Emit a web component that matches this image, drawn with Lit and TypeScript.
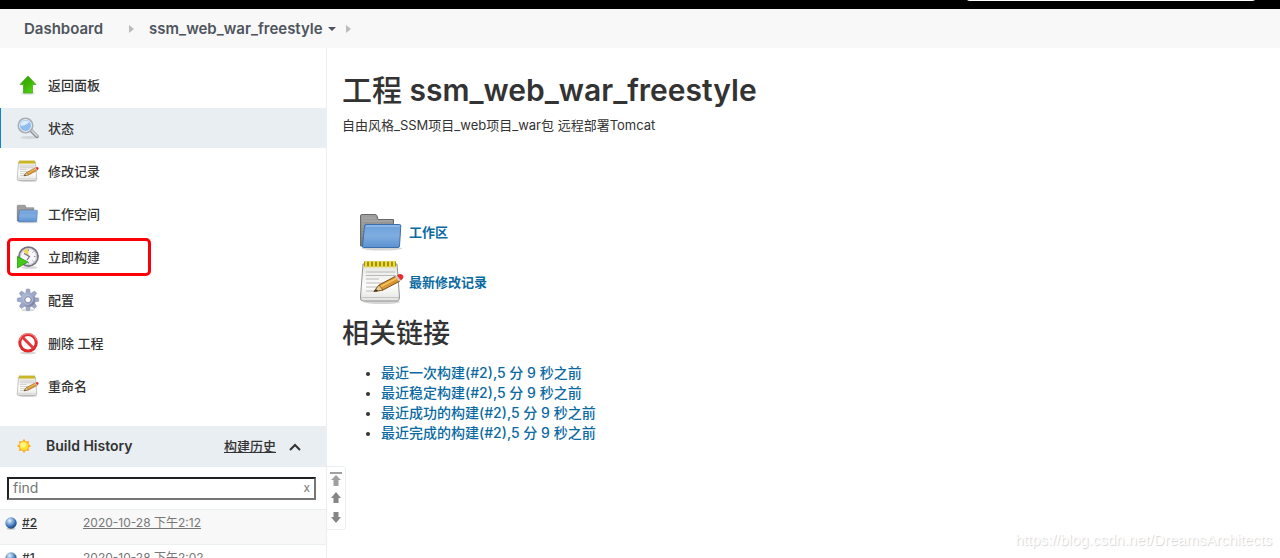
import { LitElement, html, css, svg, TemplateResult } from "lit";
import { customElement, state } from "lit/decorators.js";

const arrowIcon = svg`
  <svg viewBox="0 0 48 48" aria-hidden="true">
    <defs><linearGradient id="ag" x1="0" y1="0" x2="1" y2="1"><stop offset="0" stop-color="#2f9e00"/><stop offset=".5" stop-color="#3db503"/><stop offset="1" stop-color="#5ce01a"/></linearGradient></defs>
    <ellipse cx="24" cy="41" rx="14" ry="2.5" fill="#ccc" opacity=".7"/>
    <path d="M24 6 40 23H33V40H15V23H8Z" fill="url(#ag)" stroke="#43a81c" stroke-width="1.5" stroke-linejoin="round"/>
  </svg>`;

const searchIcon = svg`
  <svg viewBox="0 0 48 48" aria-hidden="true">
    <ellipse cx="26" cy="43" rx="17" ry="3" fill="#b9bec2" opacity=".5"/>
    <path d="M29 28 42 41" stroke="#8c9094" stroke-width="7" stroke-linecap="round"/>
    <path d="M31 29 42 40" stroke="#d8dadb" stroke-width="3.5" stroke-linecap="round"/>
    <circle cx="19" cy="19" r="14" fill="#a7cdf3" stroke="#a8acb3" stroke-width="4"/>
    <circle cx="19" cy="19" r="12" fill="#8fbdf0" stroke="#e9eff6" stroke-width="2"/>
    <path d="M9 19a10 10 0 0 1 18-6C22 14 19 21 9 19Z" fill="#dcecfc"/>
  </svg>`;

const notepadIcon = svg`
  <svg viewBox="0 0 48 48" aria-hidden="true">
    <defs><linearGradient id="ng" x1="0" y1="0" x2="0" y2="1"><stop offset="0" stop-color="#e4e4e0"/><stop offset=".6" stop-color="#fdfdfc"/><stop offset="1" stop-color="#e2e2df"/></linearGradient></defs>
    <ellipse cx="24" cy="44" rx="18" ry="2" fill="#999" opacity=".4"/>
    <path d="M5 6H39L41.500 39Q41.500 43 39 43H5Q2 43 2.500 39Z" fill="url(#ng)" stroke="#939393"/>
    <path d="M3.500 39.500H41" stroke="#c4c4c4"/>
    <path d="M8 14H37M8 17.500H37M8 21H21M8 25H34M8 29H27M8 33H18" stroke="#b9b9b9" stroke-width="1.1"/>
    <path d="M6 6H38" stroke="#857818" stroke-width="5"/>
    <path d="M8 4V8.500M12 4V8.500M16 4V8.500M20 4V8.500M24 4V8.500M28 4V8.500M32 4V8.500M36 4V8.500" stroke="#f0dc30" stroke-width="2.500" stroke-linecap="round"/>
    <path d="M16 33.500 21 27 38 18 42 23 25 32Z" fill="#d99532" stroke="#80501a" stroke-linejoin="round"/>
    <path d="M22 29 39 20" stroke="#f3c45c" stroke-width="1.8"/>
    <path d="M16 33.500 21 27 25 32Z" fill="#e8cb91" stroke="#80501a" stroke-width=".8"/>
    <path d="M16 33.500 18 31 20 33Z" fill="#333"/>
    <path d="M37 18.500 40 17 43.500 21.500 41 23.500Z" fill="#ccc"/>
    <path d="M39 17.500Q42 15 44.500 17T43 22.500Z" fill="#e62e2e"/>
  </svg>`;

const folderIcon = svg`
  <svg viewBox="0 0 48 48" aria-hidden="true">
    <defs><linearGradient id="fg" x1="0" y1="0" x2="0" y2="1"><stop offset="0" stop-color="#6b9fd9"/><stop offset=".5" stop-color="#7fade0"/><stop offset="1" stop-color="#5b91d0"/></linearGradient>
    <linearGradient id="fb" x1="0" y1="0" x2="0" y2="1"><stop offset="0" stop-color="#a0a0a0"/><stop offset="1" stop-color="#777"/></linearGradient></defs>
    <ellipse cx="24" cy="40.500" rx="20" ry="2" fill="#999" opacity=".4"/>
    <path d="M2.500 38V8Q2.500 6.500 4 6.500H17Q18.500 6.500 19 8L20 11.500H35.500V38Z" fill="url(#fb)" stroke="#696969"/>
    <path d="M4 10H18M4 13H34M4 16H7M4 19H7M4 22H6M4 25H6M4 28H6" stroke="#b4b4b4" stroke-width=".7"/>
    <path d="M8 16.500H41.500Q43 16.500 42.800 18L41.500 38Q41.400 39.500 40 39.500H5.500Q4 39.500 4.500 38L6.500 18Q6.700 16.500 8 16.500Z" fill="url(#fg)" stroke="#3a6fae"/>
    <path d="M8 18H41.500" stroke="#a9caef"/>
  </svg>`;

const clockIcon = svg`
  <svg viewBox="0 0 48 48" aria-hidden="true">
    <ellipse cx="27" cy="45" rx="16" ry="2.500" fill="#bbb" opacity=".6"/>
    <circle cx="25" cy="23" r="19" fill="#f6f6fa" stroke="#777382" stroke-width="3.500"/>
    <circle cx="25" cy="23" r="16" fill="none" stroke="#c5c1d2" stroke-width="2"/>
    <path d="M25 23 14 12A16 16 0 0 1 25 7Z" fill="#eed65d"/>
    <path d="M25 9V12M39 23H36M25 37V34M35 13 33 15M35 33 33 31" stroke="#777" stroke-width="1.500"/>
    <path d="M16 17 27 23 22 30" fill="none" stroke="#6d687c" stroke-width="2.200"/>
    <path d="M3 23 24 34 3 46Z" fill="#42c91c" stroke="#259708" stroke-width="1.500" stroke-linejoin="round"/>
  </svg>`;

const eighths = [0, 45, 90, 135, 180, 225, 270, 315];
const gearIcon = svg`
  <svg viewBox="0 0 48 48" aria-hidden="true">
    <defs><linearGradient id="gg" x1="0" y1="0" x2="1" y2="1"><stop offset="0" stop-color="#b4c1de"/><stop offset=".55" stop-color="#98a3c6"/><stop offset="1" stop-color="#6f6f90"/></linearGradient></defs>
    <ellipse cx="24" cy="44" rx="14" ry="2.500" fill="#bbb" opacity=".5"/>
    ${eighths.map((a) => svg`<path d="M19 12 21 2H27L29 12Z" transform="rotate(${a} 24 23.500)" fill="#9da8c8" stroke="#828cae" stroke-width="1"/>`)}
    <circle cx="24" cy="23.500" r="14.500" fill="url(#gg)"/>
    <circle cx="24" cy="23.500" r="9" fill="none" stroke="#b5bed8" stroke-width="2"/>
    <circle cx="24" cy="23.500" r="6" fill="#fff" stroke="#737c9f" stroke-width="1.500"/>
  </svg>`;

const stopIcon = svg`
  <svg viewBox="0 0 48 48" aria-hidden="true">
    <ellipse cx="24" cy="44" rx="16" ry="2.500" fill="#bbb" opacity=".6"/>
    <circle cx="24" cy="23.500" r="16.500" fill="#fff" stroke="#e0282d" stroke-width="6"/>
    <path d="M13 12.500 35 34.500" stroke="#e5383a" stroke-width="6"/>
    <path d="M7 18.500A17.500 17.500 0 0 1 41 18.500" fill="none" stroke="#f58886" stroke-width="2.500"/>
  </svg>`;

const sunIcon = svg`
  <svg class="sun" viewBox="0 0 16 16" aria-hidden="true">
    ${eighths.map((a) => svg`<path d="M6 4 8 .8 10 4Z" transform="rotate(${a} 8 8)" fill="#fbab1f"/>`)}
    <circle cx="8" cy="8" r="4.700" fill="#ffe02e" stroke="#f8b02a" stroke-width=".8"/>
    <circle cx="7" cy="7" r="2.800" fill="#fff582"/>
  </svg>`;

const ballIcon = svg`
  <svg class="ball" viewBox="0 0 16 16" aria-hidden="true">
    <defs><radialGradient id="bg" cx=".38" cy=".3" r=".7"><stop offset="0" stop-color="#eaf3fb"/><stop offset=".35" stop-color="#8cb4dd"/><stop offset=".8" stop-color="#2c64ab"/><stop offset="1" stop-color="#1c4683"/></radialGradient></defs>
    <ellipse cx="8" cy="14.500" rx="5" ry="1.200" fill="#999" opacity=".5"/>
    <circle cx="8" cy="8" r="6.500" fill="url(#bg)"/>
  </svg>`;

interface Task {
  label: string;
  icon: TemplateResult;
  active?: boolean;
  marked?: boolean;
}

const tasks: Task[] = [
  { label: "返回面板", icon: arrowIcon },
  { label: "状态", icon: searchIcon, active: true },
  { label: "修改记录", icon: notepadIcon },
  { label: "工作空间", icon: folderIcon },
  { label: "立即构建", icon: clockIcon, marked: true },
  { label: "配置", icon: gearIcon },
  { label: "删除 工程", icon: stopIcon },
  { label: "重命名", icon: notepadIcon },
];

const builds = [
  { id: "#2", date: "2020-10-28 下午2:12" },
  { id: "#1", date: "2020-10-28 下午2:02" },
];

const permalinks = [
  "最近一次构建(#2),5 分 9 秒之前",
  "最近稳定构建(#2),5 分 9 秒之前",
  "最近成功的构建(#2),5 分 9 秒之前",
  "最近完成的构建(#2),5 分 9 秒之前",
];

@customElement("side-panel")
class SidePanel extends LitElement {
  @state() private filter = "";

  static styles = css`
    :host {
      display: block;
      box-sizing: border-box;
      padding-top: 17px;
      border-right: 1px solid #eaeff2;
      color: #333;
      font-size: 13px;
    }
    * { box-sizing: border-box; }
    a { color: inherit; }
    .tasks { display: flex; flex-direction: column; gap: 3px; margin: 0 0 20px; padding: 0; list-style: none; }
    .task {
      position: relative;
      display: flex;
      align-items: center;
      gap: 8px;
      height: 40px;
      padding-left: 16px;
      font-weight: 500;
      text-decoration: none;
    }
    .task svg { width: 24px; height: 24px; }
    .active { background: #e9eef2; box-shadow: inset 1px 0 #0b84d8; }
    .marked::after {
      content: "";
      position: absolute;
      inset: 1px auto 1px 7px;
      box-sizing: border-box;
      width: 144px;
      border: 3px solid #fb0007;
      border-radius: 5px;
    }
    .history { position: relative; }
    .head { display: flex; align-items: center; height: 41px; padding: 0 24px 2px 16px; background: #e9eef2; }
    .sun { width: 16px; height: 16px; }
    .title { margin: 0 auto 0 14px; font-size: 14px; font-weight: 600; }
    .trend { font-weight: 500; }
    .collapse { display: flex; margin-left: 12px; padding: 0; border: 0; background: none; color: #333; }
    .collapse svg { width: 14px; height: 14px; }
    .find { display: flex; align-items: center; height: 42px; padding: 0 10px 0 7px; }
    .box { display: flex; flex: 1; align-items: center; height: 23px; border: 2px inset #767676; background: #fff; }
    .box input {
      flex: 1;
      min-width: 0;
      padding: 0 4px;
      border: 0;
      outline: 0;
      background: none;
      font: inherit;
      font-size: 14px;
    }
    .box input::placeholder { color: #757575; }
    .box button { padding: 0 4px; border: 0; background: none; color: #777; font: inherit; font-size: 12px; }
    .builds { width: 100%; border-collapse: collapse; }
    .builds tr { height: 35px; border-top: 1px solid #eaeff2; }
    .builds tr:nth-child(odd) { background: #f8f8f8; }
    .builds td { padding: 4px 0 0; font-size: 12px; line-height: 18px; vertical-align: top; }
    .build { display: flex; align-items: center; gap: 4px; width: 83px; padding-left: 4px; font-weight: 500; }
    .ball { width: 14px; height: 14px; }
    .date { color: #777; }
    .pager {
      position: absolute;
      top: 40px;
      left: 100%;
      display: flex;
      flex-direction: column;
      justify-content: space-around;
      width: 20px;
      height: 64px;
      padding: 2px 0;
      border: 1px solid #e8eef2;
      border-radius: 0 3px 3px 0;
      background: #fff;
    }
    .pager button { display: flex; justify-content: center; padding: 0; border: 0; background: none; color: #858585; }
    .pager svg { width: 12px; height: 14px; }
    .pager .first { color: #a0a0a0; }
  `;

  render() {
    return html`
      <nav>
        <ul class="tasks">
          ${tasks.map((t) => html`<li><a href="#" class="task ${t.active ? "active" : ""} ${t.marked ? "marked" : ""}">${t.icon}<span>${t.label}</span></a></li>`)}
        </ul>
      </nav>
      <section class="history">
        <div class="head">
          ${sunIcon}
          <h2 class="title">Build History</h2>
          <a class="trend" href="#">构建历史</a>
          <button class="collapse" aria-label="collapse">
            <svg viewBox="0 0 14 14" fill="none" stroke="currentColor" stroke-width="2"><path d="M2 11 7 6l5 5"/></svg>
          </button>
        </div>
        <div class="find">
          <div class="box">
            <input aria-label="find" placeholder="find" .value=${this.filter}
              @input=${(e: Event) => (this.filter = (e.target as HTMLInputElement).value)} />
            <button aria-label="clear" @click=${() => (this.filter = "")}>x</button>
          </div>
        </div>
        <table class="builds">
          <tbody>
            ${builds.map((b) => html`<tr>
              <td><div class="build">${ballIcon}<a href="#">${b.id}</a></div></td>
              <td width="100%"><a class="date" href="#">${b.date}</a></td>
            </tr>`)}
          </tbody>
        </table>
        <div class="pager">
          <button class="first" aria-label="newest"><svg viewBox="0 0 12 14" fill="currentColor"><path d="M0 0H12V2H0ZM6 3 11 8H8.500V14H3.500V8H1Z"/></svg></button>
          <button aria-label="newer"><svg viewBox="0 0 12 14" fill="currentColor"><path d="M6 1 11 7H8.500V12H3.500V7H1Z"/></svg></button>
          <button aria-label="older"><svg viewBox="0 0 12 14" fill="currentColor"><path d="M6 13 1 7H3.500V2H8.500V7H11Z"/></svg></button>
        </div>
      </section>
    `;
  }
}

@customElement("app-root")
class AppRoot extends LitElement {
  static styles = css`
    :host {
      position: relative;
      display: flex;
      flex-direction: column;
      height: 100vh;
      overflow: hidden;
      background: #fff;
      color: #333;
      font: 13px/20px Inter, "Noto Sans CJK SC", sans-serif;
    }
    * { box-sizing: border-box; }
    .top { display: flex; flex: none; align-items: flex-end; justify-content: flex-end; height: 9px; padding: 0 24px 8px 0; background: #000; }
    .search { flex: none; width: 290px; height: 28px; border: 0; border-radius: 4px; background: #fff; }
    .crumbs {
      display: flex;
      flex: none;
      align-items: center;
      height: 39px;
      padding-left: 24px;
      background: #f8f8f8;
      color: #4d545d;
      font-size: 15px;
      font-weight: 600;
    }
    .crumbs a { color: inherit; text-decoration: none; }
    .sep { width: 5px; height: 8px; margin: 0 15px 0 26px; fill: #bbb; }
    .caret { width: 8px; height: 4px; margin-left: 5px; fill: #4d545d; }
    .end { margin-left: 10px; }
    .body { display: grid; flex: 1; grid-template-columns: 327px 1fr; min-height: 0; }
    main { padding: 22px 15px; }
    h1 { margin: 0; font-size: 30px; font-weight: 600; line-height: 40px; }
    .kind { font-weight: 500; }
    .desc { margin: 5px 0 72px; }
    .shortcut { display: flex; align-items: center; gap: 3px; height: 50px; padding-left: 16px; }
    .shortcut svg { width: 48px; height: 48px; }
    .link { color: #0b6aa2; font-weight: 600; text-decoration: none; }
    h2 { margin: 7px 0 9px; font-size: 27px; font-weight: 500; line-height: 40px; }
    ul { margin: 0; padding-left: 39px; }
    .permalink { font-size: 14px; font-weight: 500; }
    .mark {
      position: absolute;
      right: 8px;
      bottom: 8px;
      color: #fff;
      font: 15px/20px "Liberation Sans", sans-serif;
      text-shadow: 1px 1px 1px #d4d4d4;
    }
  `;

  render() {
    return html`
      <header class="top"><input class="search" type="search" aria-label="search" /></header>
      <nav class="crumbs">
        <a href="#">Dashboard</a>
        <svg class="sep" viewBox="0 0 5 8"><path d="M0 0 5 4 0 8Z"/></svg>
        <a href="#">ssm_web_war_freestyle</a>
        <svg class="caret" viewBox="0 0 8 4"><path d="M0 0H8L4 4Z"/></svg>
        <svg class="sep end" viewBox="0 0 5 8"><path d="M0 0 5 4 0 8Z"/></svg>
      </nav>
      <div class="body">
        <side-panel></side-panel>
        <main>
          <h1><span class="kind">工程</span> ssm_web_war_freestyle</h1>
          <p class="desc">自由风格_SSM项目_web项目_war包 远程部署Tomcat</p>
          <div class="shortcut">${folderIcon}<a class="link" href="#">工作区</a></div>
          <div class="shortcut">${notepadIcon}<a class="link" href="#">最新修改记录</a></div>
          <h2>相关链接</h2>
          <ul>${permalinks.map((p) => html`<li><a class="link permalink" href="#">${p}</a></li>`)}</ul>
        </main>
      </div>
      <div class="mark">https://blog.csdn.net/DreamsArchitects</div>
    `;
  }
}
